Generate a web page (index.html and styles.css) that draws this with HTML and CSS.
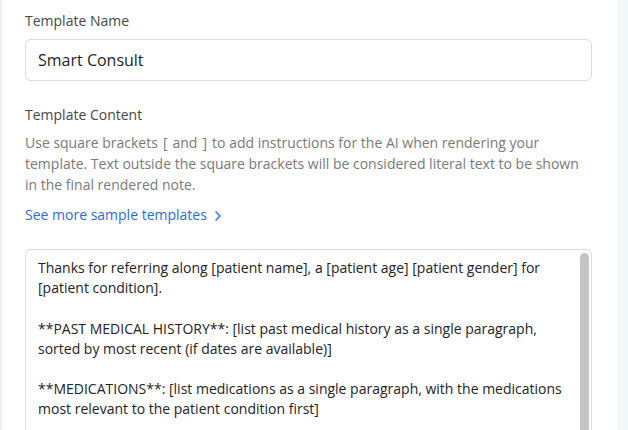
FILE: index.html
```html
<!DOCTYPE html>
<html>
<head>
<meta charset="utf-8">
<link rel="stylesheet" href="styles.css">
</head>
<body>
<div class="page">
  <main class="form">
    <label class="label">Template Name</label>
    <div class="input">Smart Consult</div>
    <label class="label label-content">Template Content</label>
    <p class="desc">Use square brackets &#8202;[&#8202; and &#8202;]&#8202; to add instructions for the AI when rendering your template. Text outside the square brackets will be considered literal text to be shown in the final rendered note.</p>
    <a class="link">See more sample templates <svg class="chev" width="8" height="12" viewBox="0 0 8 12"><path d="M2 2l4 4-4 4" fill="none" stroke="currentColor" stroke-width="1.4" stroke-linecap="round" stroke-linejoin="round"/></svg></a>
    <div class="editor">
      <p>Thanks for referring along [patient name], a [patient age] [patient gender] for [patient condition].</p>
      <p>**PAST MEDICAL HISTORY**: [list past medical history as a single paragraph, sorted by most recent (if dates are available)]</p>
      <p>**MEDICATIONS**: [list medications as a single paragraph, with the medications most relevant to the patient condition first]</p>
      <div class="thumb"></div>
    </div>
  </main>
  <aside class="side"></aside>
</div>
</body>
</html>
```
FILE: styles.css
```css
* { box-sizing: border-box; }
html, body { margin: 0; padding: 0; background: #fff; }
body { font-family: "Open Sans", "Noto Sans", sans-serif; }
.page { display: flex; height: 430px; overflow: hidden; }
.form {
  width: 617px;
  flex: none;
  border-left: 2px solid #efefef;
  padding: 11px 25px 0 23px;
  display: flex;
  flex-direction: column;
}
.side { flex: 1; background: #f3f8f9; }
.label { font-size: 14px; line-height: 20px; color: #474747; }
.input {
  margin-top: 8px;
  height: 42px;
  border: 1px solid #dcdcdc;
  border-radius: 6px;
  padding: 0 12px;
  font-size: 16px;
  line-height: 40px;
  color: #1f1f1f;
}
.label-content { margin-top: 24px; }
.desc {
  margin: 7px 0 0;
  font-size: 14px;
  line-height: 21px;
  color: #7a7a7a;
}
.link {
  margin-top: 10px;
  font-size: 14px;
  line-height: 20px;
  color: #2e6bd6;
  display: flex;
  align-items: center;
  gap: 7px;
}
.chev { margin-top: 1px; }
.editor {
  position: relative;
  margin-top: 24px;
  height: 240px;
  flex: none;
  border: 1px solid #dcdcdc;
  border-radius: 6px;
  padding: 8px 16px 8px 12px;
  font-size: 14px;
  line-height: 20.2px;
  color: #232323;
  overflow: hidden;
}
.editor p { margin: 0 0 20.2px; }
.thumb {
  position: absolute;
  top: 3px;
  right: 2px;
  width: 9px;
  height: 230px;
  background: #c4c4c4;
  border-radius: 5px;
}
```
